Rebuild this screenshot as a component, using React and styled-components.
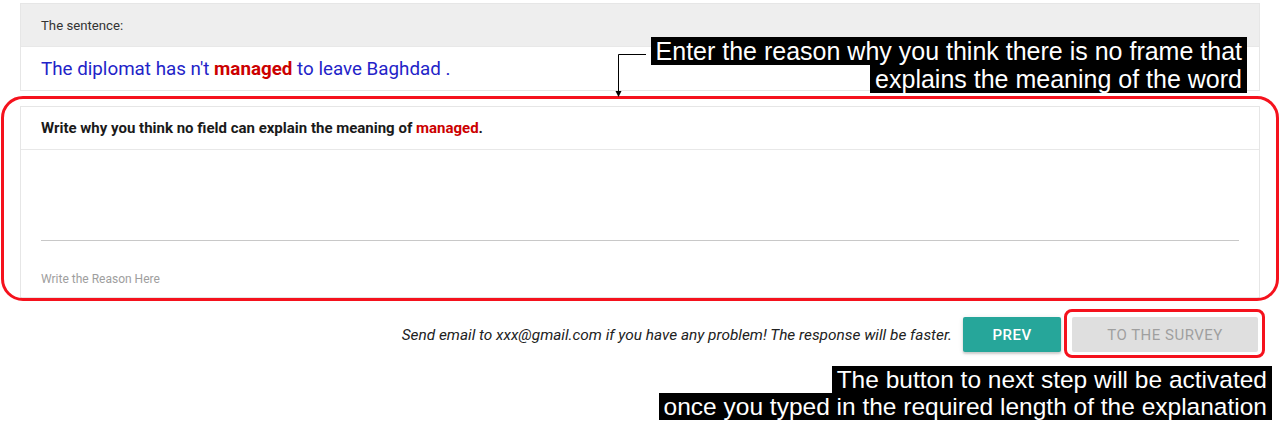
import styled, { createGlobalStyle } from "styled-components";

const GlobalStyle = createGlobalStyle`
  body {
    margin: 0;
    background: #ffffff;
    font-family: Roboto, "Liberation Sans", sans-serif;
  }
`;

const Page = styled.div`
  position: relative;
  width: 1280px;
  height: 425px;
  padding: 3px 20px 0;
  box-sizing: border-box;
  display: flex;
  flex-direction: column;
  gap: 15px;
`;

const Card = styled.div`
  border: 1px solid #e6e6e6;
  background: #ffffff;
  display: flex;
  flex-direction: column;
`;

const CardHead = styled.div`
  height: 42px;
  padding: 0 20px;
  display: flex;
  align-items: center;
  background: ${({ grey }) => (grey ? "#eeeeee" : "#ffffff")};
  border-bottom: 1px solid #e8e8e8;
  font-size: ${({ bold }) => (bold ? 15 : 13.2)}px;
  color: ${({ grey }) => (grey ? "#333333" : "#1a1a1a")};
  font-weight: ${({ bold }) => (bold ? 700 : 400)};
`;

const Sentence = styled.div`
  height: 43px;
  padding: 0 20px;
  display: flex;
  align-items: center;
  font-size: 18.8px;
  color: #2323c8;
`;

const Target = styled.span`
  color: #cc0000;
  font-weight: ${({ bold }) => (bold ? 700 : "inherit")};
`;

const Field = styled.div`
  padding: 0 20px;
  display: flex;
  flex-direction: column;
`;

const Underline = styled.div`
  margin-top: 90px;
  height: 1px;
  background: #c8c8c8;
`;

const Placeholder = styled.div`
  height: 56px;
  display: flex;
  align-items: center;
  padding-top: 19px;
  box-sizing: border-box;
  font-size: 12px;
  color: #9e9e9e;
`;

const Footer = styled.div`
  margin-top: 4px;
  padding-right: 2px;
  display: flex;
  justify-content: flex-end;
  align-items: center;
  gap: 11px;
`;

const Note = styled.span`
  font-size: 15.4px;
  font-style: italic;
  color: #222222;
`;

const Button = styled.button`
  width: ${({ w }) => w}px;
  height: 35px;
  padding: 0;
  border: none;
  border-radius: 2px;
  font-family: Roboto, "Liberation Sans", sans-serif;
  font-size: 15px;
  font-weight: ${({ disabled }) => (disabled ? 400 : 500)};
  letter-spacing: 0.5px;
  text-transform: uppercase;
  background: ${({ disabled }) => (disabled ? "#dfdfdf" : "#26a69a")};
  color: ${({ disabled }) => (disabled ? "#9f9f9f" : "#ffffff")};
  box-shadow: ${({ disabled }) =>
    disabled ? "none" : "0 2px 2px rgba(0,0,0,0.14), 0 1px 5px rgba(0,0,0,0.12)"};
`;

const Highlight = styled.div`
  position: absolute;
  left: ${({ x }) => x}px;
  top: ${({ y }) => y}px;
  width: ${({ w }) => w}px;
  height: ${({ h }) => h}px;
  border: 3px solid #f5121d;
  border-radius: ${({ r }) => r}px;
  box-sizing: border-box;
  pointer-events: none;
`;

const Callout = styled.div`
  position: absolute;
  right: ${({ right }) => right}px;
  top: ${({ y }) => y}px;
  display: flex;
  flex-direction: column;
  align-items: flex-end;
  font-family: "Liberation Sans", Arial, sans-serif;
  font-size: ${({ size }) => size}px;
  line-height: ${({ lh }) => lh}px;
  color: #ffffff;
`;

const CalloutLine = styled.span`
  background: #000000;
  padding: 0 5px;
  white-space: nowrap;
`;

const Connector = styled.svg`
  position: absolute;
  left: 612px;
  top: 50px;
`;

export default function App() {
  return (
    <>
      <GlobalStyle />
      <Page>
        <Card>
          <CardHead grey>The sentence:</CardHead>
          <Sentence>
            The diplomat has n't&nbsp;<Target bold>managed</Target>&nbsp;to leave Baghdad .
          </Sentence>
        </Card>

        <Card>
          <CardHead bold>
            Write why you think no field can explain the meaning of&nbsp;
            <Target>managed</Target>.
          </CardHead>
          <Field>
            <Underline />
            <Placeholder>Write the Reason Here</Placeholder>
          </Field>
        </Card>

        <Footer>
          <Note>
            Send email to xxx@gmail.com if you have any problem! The response will be faster.
          </Note>
          <Button w={98}>Prev</Button>
          <Button disabled w={186}>
            To the survey
          </Button>
        </Footer>

        <Highlight x={1} y={96} w={1278} h={205} r={22} />
        <Highlight x={1064} y={309} w={201} h={49} r={8} />

        <Connector width="40" height="50" viewBox="0 0 40 50">
          <path d="M34 4.5 H6.5 V42" fill="none" stroke="#000" strokeWidth="1" />
          <path d="M3.5 41 L9.5 41 L6.5 47 Z" fill="#000" />
        </Connector>

        <Callout right={33} y={37} size={25} lh={28}>
          <CalloutLine>Enter the reason why you think there is no frame that</CalloutLine>
          <CalloutLine>explains the meaning of the word</CalloutLine>
        </Callout>

        <Callout right={8} y={366} size={24.5} lh={27}>
          <CalloutLine>The button to next step will be activated</CalloutLine>
          <CalloutLine>once you typed in the required length of the explanation</CalloutLine>
        </Callout>
      </Page>
    </>
  );
}
